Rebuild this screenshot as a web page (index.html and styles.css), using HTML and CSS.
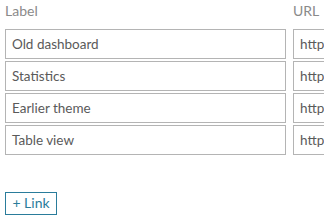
FILE: index.html
```html
<!DOCTYPE html>
<html>
<head>
<meta charset="utf-8">
<link rel="stylesheet" href="styles.css">
</head>
<body>
<div class="links">
  <div class="grid">
    <div class="head">Label</div>
    <div class="head">URL</div>
    <div class="field">Old dashboard</div>
    <div class="field url">http://</div>
    <div class="field">Statistics</div>
    <div class="field url">http://</div>
    <div class="field">Earlier theme</div>
    <div class="field url">http://</div>
    <div class="field">Table view</div>
    <div class="field url">http://</div>
  </div>
  <div class="actions">
    <button class="add">+ Link</button>
  </div>
</div>
</body>
</html>
```
FILE: styles.css
```css
html, body {
  margin: 0;
  padding: 0;
  background: #ffffff;
  overflow: hidden;
}
body {
  width: 324px;
  height: 216px;
  font-family: "Lato", "Open Sans", sans-serif;
}
.links {
  padding: 0 0 0 5px;
}
.grid {
  display: grid;
  grid-template-columns: 281px 31px;
  column-gap: 7px;
  row-gap: 2px;
}
.head {
  font-size: 14px;
  color: #8a8a8a;
  height: 27px;
  line-height: 22px;
}
.field {
  box-sizing: border-box;
  height: 30px;
  border: 1px solid #b4b4b4;
  font-size: 13.5px;
  color: #5a5a5a;
  padding: 0 6px;
  line-height: 28px;
  white-space: nowrap;
  overflow: hidden;
}
.url {
  border-right: none;
  padding-right: 0;
  text-overflow: clip;
}
.actions {
  display: flex;
  padding-top: 37px;
}
.add {
  display: flex;
  align-items: center;
  justify-content: center;
  margin: 0;
  box-sizing: border-box;
  width: 52px;
  height: 23px;
  border: 1px solid #2a7c9b;
  border-radius: 0;
  background: #ffffff;
  color: #2a7c9b;
  font-family: "Lato", "Open Sans", sans-serif;
  font-size: 14px;
  padding: 0 0 3px 0;
}
```
